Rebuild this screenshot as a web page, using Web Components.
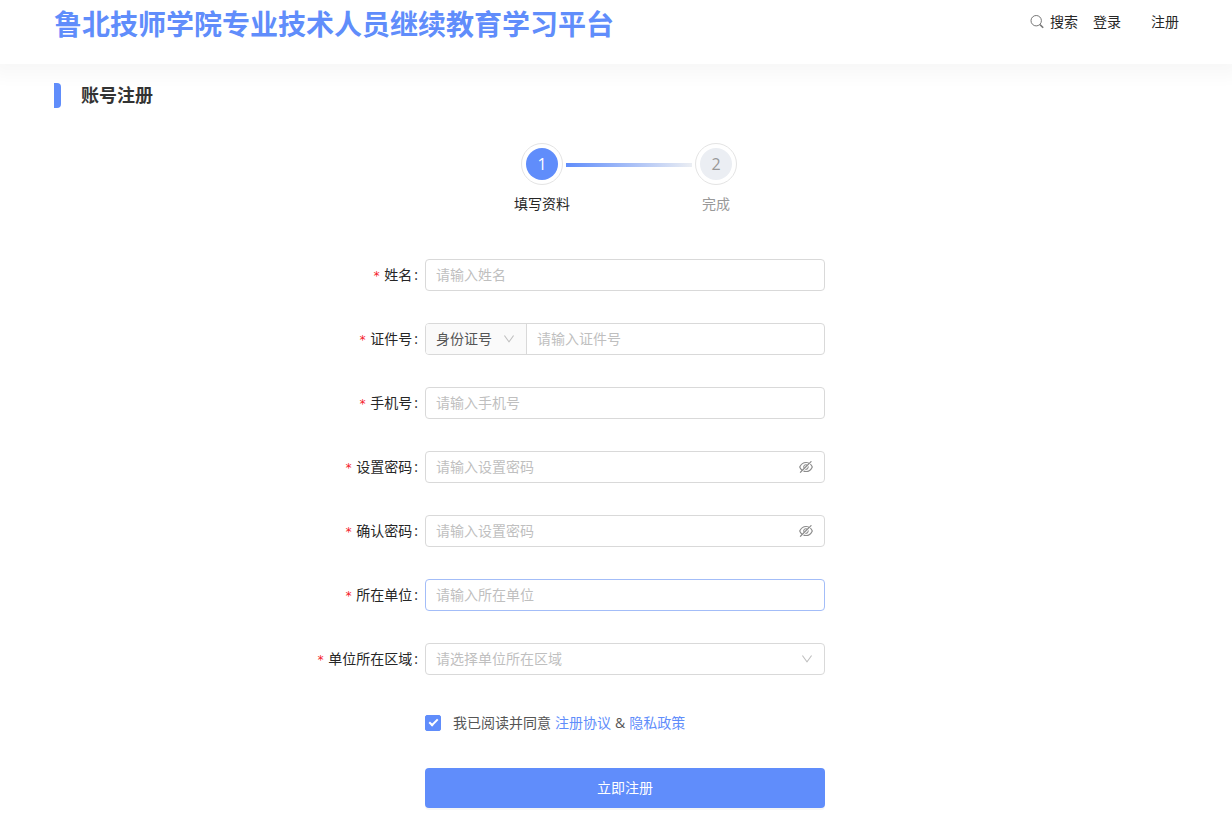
<!DOCTYPE html>
<html lang="zh-CN">
<head>
<meta charset="UTF-8">
<meta name="viewport" content="width=device-width, initial-scale=1.0">
<title>账号注册</title>
<style>
  :root {
    --primary-color: #608dfb;
    --text-color: #262626;
    --border-color: #d9d9d9;
    --hint-color: #bfbfbf;
  }

  body {
    margin: 0;
    background: #fff;
    color: var(--text-color);
    font: 14px/22px "Open Sans", "Noto Sans CJK SC", sans-serif;
  }
</style>
</head>
<body>
<register-page></register-page>

<script>
class SiteHeader extends HTMLElement {
  constructor() {
    super();
    this.attachShadow({ mode: 'open' });
    this.render();
  }

  render() {
    this.shadowRoot.innerHTML = `
      <style>
        :host {
          display: block;
          background: #fff;
          box-shadow: 0 4px 16px 8px rgba(0, 0, 0, 0.03);
        }

        header {
          display: flex;
          justify-content: space-between;
          align-items: flex-start;
          min-height: 64px;
          padding: 0 53px 0 54px;
          box-sizing: border-box;
        }

        h1 {
          margin: 0;
          font-size: 28px;
          line-height: 48px;
          font-weight: 700;
          color: var(--primary-color);
        }

        nav {
          display: flex;
          align-items: center;
          padding-top: 11px;
        }

        button {
          display: flex;
          align-items: center;
          gap: 6px;
          margin-right: 15px;
          padding: 0;
          border: none;
          background: none;
          font: inherit;
          color: inherit;
          cursor: pointer;
        }

        button svg {
          width: 14px;
          height: 14px;
          fill: none;
          stroke: #777;
        }

        a {
          color: inherit;
          text-decoration: none;
        }

        a + a {
          margin-left: 30px;
        }
      </style>

      <header>
        <h1><slot></slot></h1>
        <nav>
          <button type="button">
            <svg viewBox="0 0 14 14" aria-hidden="true">
              <circle cx="6.2" cy="5.7" r="5.2"/>
              <path d="M10 9.6l3.2 3.2" stroke-width="1.5"/>
            </svg>
            <span>搜索</span>
          </button>
          <a href="#login">登录</a>
          <a href="#register">注册</a>
        </nav>
      </header>
    `;
  }
}

class StepItem extends HTMLElement {
  constructor() {
    super();
    this.attachShadow({ mode: 'open' });
    this.render();
  }

  render() {
    this.shadowRoot.innerHTML = `
      <style>
        :host {
          display: flex;
          flex-direction: column;
          align-items: center;
          width: 42px;
          color: #999;
          white-space: nowrap;
        }

        .ring {
          padding: 4px;
          border: 1px solid #e4e4e4;
          border-radius: 50%;
        }

        .number {
          width: 32px;
          border-radius: 50%;
          background: #ebeef3;
          font-size: 16px;
          line-height: 32px;
          text-align: center;
        }

        .title {
          margin-top: 8px;
        }

        :host([active]) {
          color: var(--text-color);
        }

        :host([active]) .number {
          background: var(--primary-color);
          color: #fff;
        }
      </style>

      <div class="ring"><div class="number">${this.getAttribute('number')}</div></div>
      <div class="title"><slot></slot></div>
    `;
  }
}

class StepBar extends HTMLElement {
  constructor() {
    super();
    this.attachShadow({ mode: 'open' });
    this.render();
  }

  render() {
    this.shadowRoot.innerHTML = `
      <style>
        :host {
          display: flex;
          justify-content: center;
          gap: 3px;
        }

        .line {
          width: 126px;
          height: 4px;
          margin-top: 20px;
          background: linear-gradient(90deg, var(--primary-color), #ebeef3);
        }
      </style>

      <slot name="first"></slot>
      <div class="line"></div>
      <slot name="last"></slot>
    `;
  }
}

class FormField extends HTMLElement {
  constructor() {
    super();
    this.attachShadow({ mode: 'open' });
    this.render();
    this.setupEventListeners();
  }

  control() {
    const kind = this.getAttribute('kind') || 'text';
    const hint = this.getAttribute('placeholder');
    const arrow = `
      <svg class="arrow" viewBox="64 64 896 896" aria-hidden="true">
        <path d="M884 256h-75c-5.1 0-9.9 2.5-12.9 6.6L512 654.2 227.9 262.6c-3-4.1-7.8-6.6-12.9-6.6h-75c-6.5 0-10.3 7.4-6.5 12.7l352.6 486.1c12.8 17.6 39 17.6 51.7 0l352.6-486.1c3.9-5.3.1-12.7-6.4-12.7z"/>
      </svg>`;

    if (kind === 'select') {
      return `
        <select id="control" class="hint"><option>${hint}</option></select>
        ${arrow}`;
    }
    if (kind === 'card') {
      return `
        <div class="addon">
          <select aria-label="证件类型"><option>身份证号</option></select>
          ${arrow}
        </div>
        <input id="control" type="text" placeholder="${hint}">`;
    }
    if (kind === 'password') {
      return `
        <input id="control" type="password" placeholder="${hint}">
        <button type="button" aria-label="显示密码">
          <svg viewBox="64 64 896 896" aria-hidden="true">
            <path d="M942.2 486.2Q889.47 375.11 816.7 305l-50.88 50.88C807.31 395.53 843.45 447.4 874.7 512 791.5 684.2 673.4 766 512 766q-72.67 0-133.87-22.38L323 798.75Q408 838 512 838q288.3 0 430.2-300.3a60.29 60.29 0 000-51.5zm-63.57-320.64L836 122.88a8 8 0 00-11.32 0L715.31 232.2Q624.86 186 512 186q-288.3 0-430.2 300.3a60.3 60.3 0 000 51.5q56.69 119.4 136.5 191.41L112.48 835a8 8 0 000 11.31L155.17 889a8 8 0 0011.31 0l712.15-712.12a8 8 0 000-11.32zM149.3 512C232.6 339.8 350.7 258 512 258c54.54 0 104.13 9.36 149.12 28.39l-70.3 70.3a176 176 0 00-238.13 238.13l-83.42 83.42C223.1 637.49 183.3 582.28 149.3 512zm246.7 0a112.11 112.11 0 01146.2-106.69L401.31 546.2A112 112 0 01396 512z"/>
            <path d="M508 624c-3.46 0-6.87-.16-10.25-.47l-52.82 52.82a176.09 176.09 0 00227.42-227.42l-52.82 52.82c.31 3.38.47 6.79.47 10.25a111.94 111.94 0 01-112 112z"/>
          </svg>
        </button>`;
    }
    return `<input id="control" type="text" placeholder="${hint}">`;
  }

  render() {
    this.shadowRoot.innerHTML = `
      <style>
        :host {
          display: grid;
          grid-template-columns: 1fr minmax(0, 400px) 1fr;
          align-items: center;
        }

        label {
          padding-right: 7px;
          text-align: right;
          white-space: nowrap;
        }

        .star {
          margin-right: 4px;
          font-family: "DejaVu Sans Mono", monospace;
          font-size: 12px;
          color: #f5222d;
        }

        .colon {
          margin-left: 2px;
        }

        .box {
          position: relative;
          display: flex;
          height: 32px;
          box-sizing: border-box;
          border: 1px solid var(--border-color);
          border-radius: 4px;
          background: #fff;
          overflow: hidden;
        }

        :host([active]) .box {
          border-color: #a3bdf8;
        }

        input,
        select {
          flex: 1;
          min-width: 0;
          margin: 0;
          padding: 0 10px;
          border: none;
          outline: none;
          background: none;
          appearance: none;
          font: inherit;
          color: inherit;
        }

        input::placeholder {
          color: var(--hint-color);
          opacity: 1;
        }

        select.hint {
          color: var(--hint-color);
        }

        .addon {
          position: relative;
          display: flex;
          width: 100px;
          border-right: 1px solid var(--border-color);
          background: #fafafa;
          color: #555;
        }

        .arrow {
          position: absolute;
          top: 9px;
          right: 11px;
          width: 12px;
          height: 12px;
          fill: var(--hint-color);
          pointer-events: none;
        }

        button {
          display: flex;
          align-items: center;
          padding: 0 11px;
          border: none;
          background: none;
          cursor: pointer;
        }

        button svg {
          width: 14px;
          height: 14px;
          fill: #8c8c8c;
        }
      </style>

      <label for="control"><span class="star">*</span>${this.getAttribute('label')}<span class="colon">:</span></label>
      <div class="box">${this.control()}</div>
    `;
  }

  setupEventListeners() {
    const toggle = this.shadowRoot.querySelector('button');
    if (!toggle) return;
    const input = this.shadowRoot.getElementById('control');

    toggle.addEventListener('click', () => {
      input.type = input.type === 'password' ? 'text' : 'password';
    });
  }
}

class AgreeCheck extends HTMLElement {
  constructor() {
    super();
    this.attachShadow({ mode: 'open' });
    this.render();
  }

  render() {
    this.shadowRoot.innerHTML = `
      <style>
        :host {
          display: flex;
          align-items: center;
          gap: 4px;
          color: #555;
        }

        label {
          display: flex;
          align-items: center;
          gap: 12px;
        }

        input {
          display: grid;
          place-items: center;
          width: 16px;
          height: 16px;
          margin: 0;
          appearance: none;
          border: 1px solid var(--border-color);
          border-radius: 2px;
        }

        input:checked {
          border-color: var(--primary-color);
          background: var(--primary-color);
        }

        input:checked::before {
          content: "";
          width: 7px;
          height: 3px;
          margin-bottom: 3px;
          border: solid #fff;
          border-width: 0 0 2px 2px;
          transform: rotate(-45deg);
        }

        a {
          color: var(--primary-color);
          text-decoration: none;
        }
      </style>

      <label><input type="checkbox" checked><span>我已阅读并同意</span></label>
      <a href="#agreement">注册协议</a>
      <span>&amp;</span>
      <a href="#privacy">隐私政策</a>
    `;
  }
}

class RegisterPage extends HTMLElement {
  constructor() {
    super();
    this.attachShadow({ mode: 'open' });
    this.render();
  }

  render() {
    this.shadowRoot.innerHTML = `
      <style>
        :host {
          display: block;
        }

        h2 {
          display: flex;
          align-items: center;
          gap: 20px;
          margin: 18px 54px 0;
          font-size: 18px;
          line-height: 26px;
          font-weight: 700;
          color: #333;
        }

        h2::before {
          content: "";
          width: 7px;
          height: 25px;
          border-radius: 0 4px 4px 0;
          background: var(--primary-color);
        }

        step-bar {
          margin-top: 35px;
          padding-left: 26px;
        }

        form {
          display: flex;
          flex-direction: column;
          gap: 32px;
          margin-top: 44px;
          padding: 0 0 27px 18px;
        }

        .row {
          display: grid;
          grid-template-columns: 1fr minmax(0, 400px) 1fr;
        }

        .row > * {
          grid-column: 2;
        }

        agree-check {
          height: 32px;
        }

        .submit {
          height: 40px;
          margin-top: -3px;
          border: none;
          border-radius: 4px;
          background: var(--primary-color);
          box-shadow: 0 2px 0 rgba(0, 0, 0, 0.04);
          font: inherit;
          color: #fff;
          cursor: pointer;
        }
      </style>

      <site-header>鲁北技师学院专业技术人员继续教育学习平台</site-header>
      <main>
        <h2>账号注册</h2>
        <step-bar>
          <step-item slot="first" number="1" active>填写资料</step-item>
          <step-item slot="last" number="2">完成</step-item>
        </step-bar>
        <form>
          <form-field label="姓名" placeholder="请输入姓名"></form-field>
          <form-field label="证件号" placeholder="请输入证件号" kind="card"></form-field>
          <form-field label="手机号" placeholder="请输入手机号"></form-field>
          <form-field label="设置密码" placeholder="请输入设置密码" kind="password"></form-field>
          <form-field label="确认密码" placeholder="请输入设置密码" kind="password"></form-field>
          <form-field label="所在单位" placeholder="请输入所在单位" active></form-field>
          <form-field label="单位所在区域" placeholder="请选择单位所在区域" kind="select"></form-field>
          <div class="row"><agree-check></agree-check></div>
          <div class="row"><button class="submit" type="button">立即注册</button></div>
        </form>
      </main>
    `;
  }
}

customElements.define('site-header', SiteHeader);
customElements.define('step-item', StepItem);
customElements.define('step-bar', StepBar);
customElements.define('form-field', FormField);
customElements.define('agree-check', AgreeCheck);
customElements.define('register-page', RegisterPage);
</script>
</body>
</html>
